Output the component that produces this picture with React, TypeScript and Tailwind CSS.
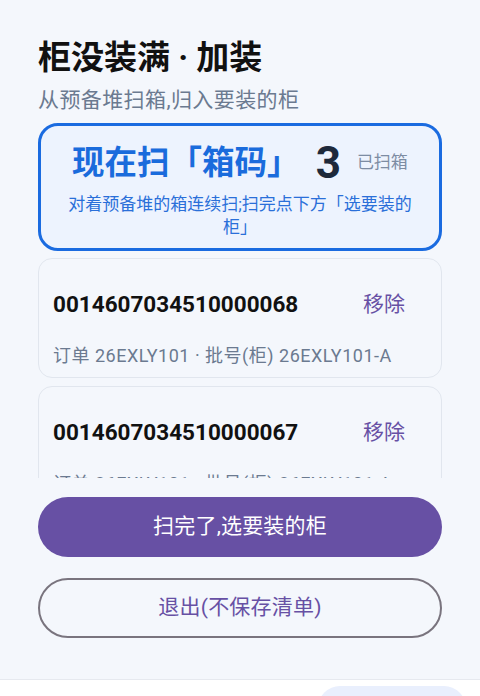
const font = { fontFamily: 'Roboto, "Noto Sans CJK SC", sans-serif' };

const boxes = [
  { code: '0014607034510000068', order: '26EXLY101', batch: '26EXLY101-A' },
  { code: '0014607034510000067', order: '26EXLY101', batch: '26EXLY101-A' },
];

function BoxCard({ code, order, batch }: { code: string; order: string; batch: string }) {
  return (
    <div className="shrink-0 rounded-[14px] border-[1.5px] border-[#e1e6ee] px-[14px] pt-[14px] pb-[9px]">
      <div className="flex h-[64px] items-center justify-between">
        <span className="text-[22.5px] font-bold text-[#111]">{code}</span>
        <button className="px-[22px] text-[21px] text-[#6750a4]">移除</button>
      </div>
      <div className="mt-[7px] text-[18px] leading-[24px] tracking-[0.5px] text-[#6b7a90]">
        订单 {order} · 批号(柜) {batch}
      </div>
    </div>
  );
}

export default function App() {
  return (
    <div className="flex h-[696px] flex-col overflow-hidden bg-[#f4f7fc]" style={font}>
      <div className="flex h-[679px] shrink-0 flex-col px-[38px] pt-[38px]">
        {/* Header */}
        <h1 className="text-[33px] font-bold leading-[40px] text-[#111]">柜没装满 · 加装</h1>
        <p className="mt-2 text-[21px] leading-[28px] tracking-[0.4px] text-[#6b7a90]">从预备堆扫箱,归入要装的柜</p>

        {/* Scan prompt */}
        <div className="mt-[9px] rounded-[20px] border-[3px] border-[#1a6be0] bg-[#edf3fe] px-6 pt-[15px] pb-[9px]">
          <div className="flex h-[44px] items-center justify-center">
            <span className="text-[32.5px] font-bold text-[#1a6bdc]">现在扫「箱码」</span>
            <span className="ml-4 text-[44px] font-bold text-[#1e293b]">3</span>
            <span className="ml-4 text-[17px] text-[#7d8ca3]">已扫箱</span>
          </div>
          <p className="mt-2 text-center text-[17px] leading-[23px] text-[#2a6fd9]">
            对着预备堆的箱连续扫;扫完点下方「选要装的柜」
          </p>
        </div>

        {/* Scanned list */}
        <div className="mt-[7px] flex h-[220px] flex-col gap-2 overflow-hidden">
          {boxes.map((b) => (
            <BoxCard key={b.code} {...b} />
          ))}
        </div>

        {/* Actions */}
        <button className="mt-[19px] h-[60px] rounded-full bg-[#6750a4] text-[21px] tracking-[0.2px] text-white">
          扫完了,选要装的柜
        </button>
        <button className="mt-[21px] h-[60px] rounded-full border-2 border-[#79747e] text-[21px] tracking-[0.2px] text-[#6750a4]">
          退出(不保存清单)
        </button>
      </div>

      {/* Bottom bar */}
      <div className="flex h-[57px] shrink-0 justify-end border-t border-[#e6e9ef] bg-white pt-[6px] pr-[14px]">
        <div className="h-[44px] w-[148px] shrink-0 rounded-full bg-[#e9effd]" />
      </div>
    </div>
  );
}
